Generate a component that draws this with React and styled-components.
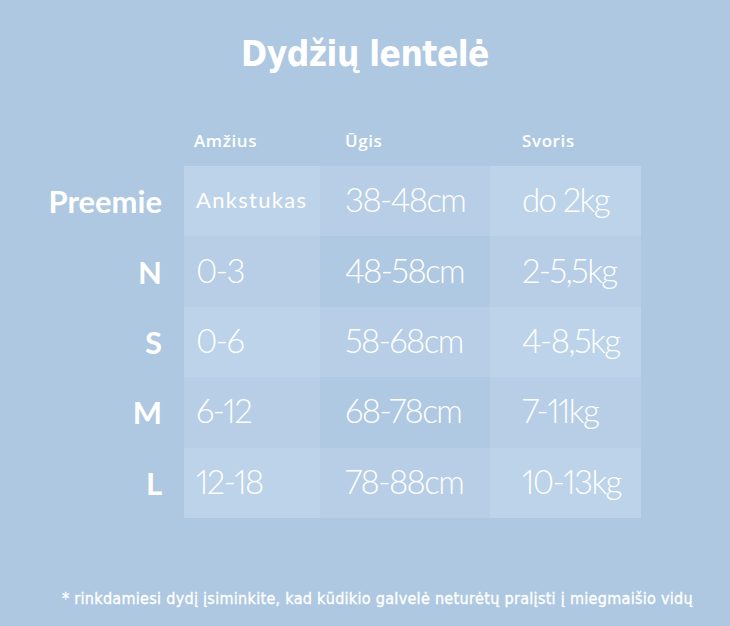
import React from 'react'
import styled, { createGlobalStyle } from 'styled-components'

const rows = [
  { size: 'Preemie', age: 'Ankstukas', height: '38-48cm', weight: 'do 2kg', word: true },
  { size: 'N', age: '0-3', height: '48-58cm', weight: '2-5,5kg' },
  { size: 'S', age: '0-6', height: '58-68cm', weight: '4-8,5kg' },
  { size: 'M', age: '6-12', height: '68-78cm', weight: '7-11kg' },
  { size: 'L', age: '12-18', height: '78-88cm', weight: '10-13kg' },
]

const App = () => {
  return (
    <>
      <GlobalStyle />
      <Page>
        <Title>Dydžių lentelė</Title>
        <Table>
          <Corner />
          <HeadCell pad={10}>Amžius</HeadCell>
          <HeadCell pad={25}>Ūgis</HeadCell>
          <HeadCell pad={32}>Svoris</HeadCell>
          {rows.map((row, i) => (
            <React.Fragment key={row.size}>
              <SizeLabel>{row.size}</SizeLabel>
              <Cell light={i % 2 === 0} pad={12} word={row.word}>{row.age}</Cell>
              <Cell light={i % 2 === 0} middle pad={25}>{row.height}</Cell>
              <Cell light={i % 2 === 0} pad={32}>{row.weight}</Cell>
            </React.Fragment>
          ))}
        </Table>
        <Note>* rinkdamiesi dydį įsiminkite, kad kūdikio galvelė neturėtų pralįsti į miegmaišio vidų</Note>
      </Page>
    </>
  )
}

const GlobalStyle = createGlobalStyle`
  body {
    margin: 0;
    background-color: #aec8e1;
  }
`

const Page = styled.div`
  width: 730px;
  height: 626px;
  box-sizing: border-box;
  padding-top: 34px;
  display: flex;
  flex-direction: column;
  color: #FFFFFF;
`

const Title = styled.h1`
  margin: 0;
  text-align: center;
  font-family: "DejaVu Sans Condensed", "DejaVu Sans", sans-serif;
  font-stretch: condensed;
  font-weight: 700;
  font-size: 35px;
  line-height: 40px;
  letter-spacing: -0.5px;
`

const Table = styled.div`
  display: grid;
  grid-template-columns: 138px 136px 170px 151px;
  grid-template-rows: 41px repeat(5, 70.4px);
  margin: 51px 0 0 46px;
`

const Corner = styled.div``

const HeadCell = styled.div`
  display: flex;
  align-items: center;
  padding-left: ${(props) => props.pad}px;
  padding-bottom: 11px;
  font-family: "Open Sans", sans-serif;
  font-weight: 600;
  font-size: 17px;
  letter-spacing: 0.6px;
`

const SizeLabel = styled.div`
  display: flex;
  align-items: center;
  justify-content: flex-end;
  padding-right: 22px;
  font-family: Lato, sans-serif;
  font-weight: 700;
  font-size: 31px;
`

const Cell = styled.div`
  display: flex;
  align-items: center;
  padding-left: ${(props) => props.pad}px;
  padding-bottom: 4px;
  background-color: ${(props) => {
    if (props.light) return props.middle ? '#b7cee6' : '#bdd3e9'
    return props.middle ? '#afc9e2' : '#b7cee6'
  }};
  font-family: Lato, sans-serif;
  font-weight: ${(props) => (props.word ? 400 : 300)};
  font-size: ${(props) => (props.word ? '22px' : '33px')};
  letter-spacing: ${(props) => (props.word ? '1.3px' : '-1.6px')};
  font-variant-numeric: proportional-nums;
`

const Note = styled.div`
  margin-top: auto;
  margin-bottom: 18px;
  padding-right: 37px;
  text-align: right;
  font-family: "DejaVu Sans Condensed", "DejaVu Sans", sans-serif;
  font-stretch: condensed;
  font-weight: 400;
  font-size: 16px;
  letter-spacing: 0.3px;
  -webkit-text-stroke: 0.35px #FFFFFF;
  white-space: nowrap;
`

export default App
